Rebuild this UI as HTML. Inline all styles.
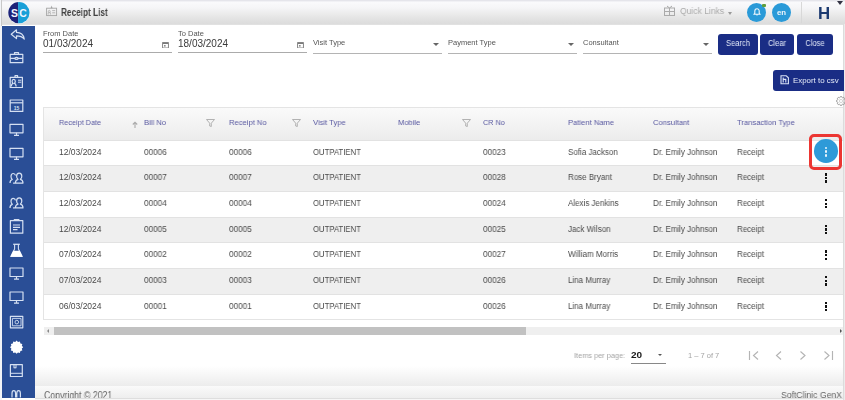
<!DOCTYPE html>
<html><head><meta charset="utf-8">
<style>
*{margin:0;padding:0;box-sizing:border-box}
html,body{width:845px;height:400px;overflow:hidden;background:#fff;font-family:"Liberation Sans",sans-serif}
.a{position:absolute}
.t{position:absolute;white-space:nowrap;line-height:1.2;font-family:"Liberation Sans",sans-serif;will-change:transform}
</style></head><body>
<div class="a" style="left:0;top:0;width:845px;height:25px;background:linear-gradient(#e2e2e8 0px,#e8e8ee 1px,#fafafc 2px,#f5f5f7 8px,#ebebeb 14px,#e1e1e1 20px,#dcdcdc 24px,#e6e6e6 25px)"></div>
<div class="a" style="left:0;top:0;width:2px;height:400px;background:#f2f4f8"></div>
<div class="a" style="left:1px;top:0;width:1px;height:26px;background:#c8c8c8"></div>
<div class="a" style="left:2px;top:26px;width:33px;height:371.7px;background:#2a4e96"></div>
<svg class="a" style="left:7.5px;top:1.5px" width="22" height="22" viewBox="0 0 22 22">
<defs><clipPath id="lc"><circle cx="10.9" cy="10.7" r="10.6"/></clipPath></defs>
<circle cx="10.9" cy="10.7" r="10.9" fill="#eaf4fb"/>
<g clip-path="url(#lc)"><rect x="0" y="0" width="10.1" height="22" fill="#1d2278"/><rect x="10.1" y="0" width="12" height="22" fill="#1aa0d8"/></g>
<text x="6.4" y="14.8" font-size="10.4" font-weight="700" fill="#f4f6ff" text-anchor="middle" font-family="Liberation Sans">S</text>
<text x="15" y="14.8" font-size="10.4" font-weight="700" fill="#f4f6ff" text-anchor="middle" font-family="Liberation Sans">C</text>
</svg>
<svg class="a" style="left:45px;top:4px" width="13" height="13" viewBox="0 0 13 13"><rect x="1.6" y="4.2" width="10" height="7.4" fill="none" stroke="#a4a4a4" stroke-width="0.9"/><path d="M5.6 4.2L6.6 1.4L7.6 4.2z" fill="#a4a4a4"/><path d="M3.2 10.6v-2h2.2v2M4.3 8.4a1 1 0 1 0 0-2a1 1 0 1 0 0 2z" fill="none" stroke="#b0b0b0" stroke-width="0.8"/><path d="M7.2 6.6h3M7.2 8.8h3" stroke="#b0b0b0" stroke-width="0.9"/></svg>
<div class="t" style="left:61.30px;top:5.66px;font-size:10.5px;color:#424242;font-weight:700;transform:scaleX(0.785);transform-origin:0 0;">Receipt List</div>
<svg class="a" style="left:664px;top:5px" width="11" height="11" viewBox="0 0 11 11"><rect x="0.5" y="3" width="10" height="7.5" fill="none" stroke="#aaa"/><path d="M0.5 6.5h10M5.5 3v7.5M3 1l2.5 2l2.5-2" fill="none" stroke="#aaa"/></svg>
<div class="t" style="left:680.00px;top:5.11px;font-size:9.6px;color:#acacac;font-weight:400;transform:scaleX(0.89);transform-origin:0 0;">Quick Links</div>
<div class="a" style="left:727.5px;top:11.5px;width:0;height:0;border-left:2.5px solid transparent;border-right:2.5px solid transparent;border-top:3px solid #999"></div>
<div class="a" style="left:747px;top:3px;width:19px;height:19px;border-radius:50%;background:#2a9ad8"></div>
<svg class="a" style="left:752.5px;top:7.8px" width="8" height="8" viewBox="0 0 8 8"><path d="M4 0.8c-1.5 0-2.2 1.1-2.2 2.5v2l-1 1h6.4l-1-1v-2c0-1.4-.7-2.5-2.2-2.5z" fill="none" stroke="#f2f8fc" stroke-width="1.1" stroke-linejoin="round"/><path d="M3 6.6a1 1 0 0 0 2 0" fill="#f2f8fc"/></svg>
<div class="a" style="left:761.6px;top:3.6px;width:4px;height:3.4px;border-radius:1px;background:#5f9e3c"></div>
<div class="a" style="left:772px;top:3px;width:19px;height:19px;border-radius:50%;background:#2a9ad8"></div>
<div class="t" style="left:776.80px;top:7.92px;font-size:7.8px;color:#eef6fc;font-weight:700;">en</div>
<div class="a" style="left:801px;top:2px;width:1px;height:21px;background:#d8d8d8"></div>
<div class="t" style="left:817.50px;top:3.70px;font-size:16.8px;color:#1c3a70;font-weight:700;">H</div>
<div class="a" style="left:837px;top:1px;width:0;height:0;border-left:3.5px solid transparent;border-right:3.5px solid transparent;border-top:4px solid #334"></div>
<div class="t" style="left:43.00px;top:28.60px;font-size:7.5px;color:#555;font-weight:400;">From Date</div>
<div class="t" style="left:43.00px;top:37.73px;font-size:10px;color:#3a3a3a;font-weight:400;">01/03/2024</div>
<svg class="a" style="left:162px;top:41.5px" width="7" height="6.5" viewBox="0 0 7 6.5"><rect x="0.6" y="0.6" width="5.8" height="5.4" fill="none" stroke="#7a7a7a" stroke-width="0.9"/><rect x="1" y="0.6" width="5" height="1.4" fill="#7a7a7a"/><rect x="2" y="3" width="1.6" height="1.6" fill="#8a8a8a"/></svg>
<div class="a" style="left:43px;top:52px;width:129px;height:1px;background:#ababab"></div>
<div class="t" style="left:178.00px;top:28.60px;font-size:7.5px;color:#555;font-weight:400;">To Date</div>
<div class="t" style="left:178.00px;top:37.73px;font-size:10px;color:#3a3a3a;font-weight:400;">18/03/2024</div>
<svg class="a" style="left:297px;top:41.5px" width="7" height="6.5" viewBox="0 0 7 6.5"><rect x="0.6" y="0.6" width="5.8" height="5.4" fill="none" stroke="#7a7a7a" stroke-width="0.9"/><rect x="1" y="0.6" width="5" height="1.4" fill="#7a7a7a"/><rect x="2" y="3" width="1.6" height="1.6" fill="#8a8a8a"/></svg>
<div class="a" style="left:178px;top:52px;width:129px;height:1px;background:#ababab"></div>
<div class="t" style="left:313.00px;top:38.30px;font-size:7.5px;color:#555;font-weight:400;">Visit Type</div>
<div class="a" style="left:433px;top:43px;width:0;height:0;border-left:3px solid transparent;border-right:3px solid transparent;border-top:3px solid #666"></div>
<div class="a" style="left:313px;top:52.5px;width:129px;height:1px;background:#b4b4b4"></div>
<div class="t" style="left:448.00px;top:38.30px;font-size:7.5px;color:#555;font-weight:400;">Payment Type</div>
<div class="a" style="left:568px;top:43px;width:0;height:0;border-left:3px solid transparent;border-right:3px solid transparent;border-top:3px solid #666"></div>
<div class="a" style="left:448px;top:52.5px;width:129px;height:1px;background:#b4b4b4"></div>
<div class="t" style="left:583.00px;top:38.30px;font-size:7.5px;color:#555;font-weight:400;">Consultant</div>
<div class="a" style="left:703px;top:43px;width:0;height:0;border-left:3px solid transparent;border-right:3px solid transparent;border-top:3px solid #666"></div>
<div class="a" style="left:583px;top:52.5px;width:129px;height:1px;background:#b4b4b4"></div>
<div class="a" style="left:718px;top:34px;width:40px;height:20.5px;border-radius:3px;background:#1a2d85"></div>
<div class="t" style="left:718px;top:39.24px;width:40px;text-align:center;font-size:8.2px;color:#e4eaf8;transform:scaleX(0.92)">Search</div>
<div class="a" style="left:760px;top:34px;width:34px;height:20.5px;border-radius:3px;background:#1a2d85"></div>
<div class="t" style="left:760px;top:39.24px;width:34px;text-align:center;font-size:8.2px;color:#e4eaf8;transform:scaleX(0.92)">Clear</div>
<div class="a" style="left:797px;top:34px;width:36px;height:20.5px;border-radius:3px;background:#1a2d85"></div>
<div class="t" style="left:797px;top:39.24px;width:36px;text-align:center;font-size:8.2px;color:#e4eaf8;transform:scaleX(0.92)">Close</div>
<div class="a" style="left:843px;top:24px;width:2px;height:376px;background:#ebebeb;border-left:1px solid #dcdcdc"></div>
<div class="a" style="left:773px;top:70px;width:70.8px;height:21px;border-radius:3px 0 0 3px;background:#1a2d85"></div>
<svg class="a" style="left:779.5px;top:75.3px" width="9.5" height="9.5" viewBox="0 0 9.5 9.5"><path d="M1 0.8h5.2l2.2 2v6h-7.4z" fill="none" stroke="#dce4f6" stroke-width="1.1"/><path d="M3.2 2.6v5M3.2 4.4h2.6v3.2" fill="none" stroke="#dce4f6" stroke-width="1.1"/></svg>
<div class="t" style="left:792.60px;top:75.72px;font-size:7.9px;color:#e4eaf8;font-weight:400;">Export to csv</div>
<svg class="a" style="left:835.5px;top:95.5px" width="10" height="10" viewBox="0 0 10 10"><polygon points="9.60,5.00 9.56,5.60 8.48,5.93 8.33,6.38 8.12,6.80 8.65,7.80 8.25,8.25 7.80,8.65 6.80,8.12 6.38,8.33 5.93,8.48 5.60,9.56 5.00,9.60 4.40,9.56 4.07,8.48 3.62,8.33 3.20,8.12 2.20,8.65 1.75,8.25 1.35,7.80 1.88,6.80 1.67,6.38 1.52,5.93 0.44,5.60 0.40,5.00 0.44,4.40 1.52,4.07 1.67,3.62 1.88,3.20 1.35,2.20 1.75,1.75 2.20,1.35 3.20,1.88 3.62,1.67 4.07,1.52 4.40,0.44 5.00,0.40 5.60,0.44 5.93,1.52 6.38,1.67 6.80,1.88 7.80,1.35 8.25,1.75 8.65,2.20 8.12,3.20 8.33,3.62 8.48,4.07 9.56,4.40" fill="none" stroke="#999" stroke-width="0.9"/><circle cx="5" cy="5" r="1.6" fill="none" stroke="#bbb" stroke-width="0.6"/></svg>
<div class="a" style="left:43px;top:107px;width:800px;height:212.5px;border:1px solid #e4e4e4;border-right:none;background:#fff"></div>
<div class="a" style="left:44px;top:108px;width:799px;height:31.5px;background:linear-gradient(#fafafa,#ececec)"></div>
<div class="t" style="left:59.00px;top:118.13px;font-size:8px;color:#5858a0;font-weight:400;transform:scaleX(0.91);transform-origin:0 0;">Receipt Date</div>
<div class="t" style="left:143.80px;top:118.13px;font-size:8px;color:#5858a0;font-weight:400;transform:scaleX(0.95);transform-origin:0 0;">Bill No</div>
<div class="t" style="left:228.60px;top:118.13px;font-size:8px;color:#5858a0;font-weight:400;transform:scaleX(0.95);transform-origin:0 0;">Receipt No</div>
<div class="t" style="left:313.40px;top:118.13px;font-size:8px;color:#5858a0;font-weight:400;transform:scaleX(0.95);transform-origin:0 0;">Visit Type</div>
<div class="t" style="left:398.20px;top:118.13px;font-size:8px;color:#5858a0;font-weight:400;transform:scaleX(0.95);transform-origin:0 0;">Mobile</div>
<div class="t" style="left:483.00px;top:118.13px;font-size:8px;color:#5858a0;font-weight:400;transform:scaleX(0.91);transform-origin:0 0;">CR No</div>
<div class="t" style="left:567.80px;top:118.13px;font-size:8px;color:#5858a0;font-weight:400;transform:scaleX(0.95);transform-origin:0 0;">Patient Name</div>
<div class="t" style="left:652.60px;top:118.13px;font-size:8px;color:#5858a0;font-weight:400;transform:scaleX(0.95);transform-origin:0 0;">Consultant</div>
<div class="t" style="left:737.40px;top:118.13px;font-size:8px;color:#5858a0;font-weight:400;transform:scaleX(0.95);transform-origin:0 0;">Transaction Type</div>
<svg class="a" style="left:132px;top:121px" width="6" height="7" viewBox="0 0 6 7"><path d="M3 7V1.5M0.8 3.5L3 1.2L5.2 3.5" fill="none" stroke="#aaa" stroke-width="1.1"/></svg>
<svg class="a" style="left:206px;top:119px" width="9" height="8" viewBox="0 0 9 8"><path d="M0.5 0.5h8L5.3 4.2v3.3L3.7 7V4.2z" fill="none" stroke="#aaa" stroke-width="0.9"/></svg>
<svg class="a" style="left:291.5px;top:119px" width="9" height="8" viewBox="0 0 9 8"><path d="M0.5 0.5h8L5.3 4.2v3.3L3.7 7V4.2z" fill="none" stroke="#aaa" stroke-width="0.9"/></svg>
<svg class="a" style="left:461.5px;top:119px" width="9" height="8" viewBox="0 0 9 8"><path d="M0.5 0.5h8L5.3 4.2v3.3L3.7 7V4.2z" fill="none" stroke="#aaa" stroke-width="0.9"/></svg>
<div class="a" style="left:44px;top:139.50px;width:799px;height:25.70px;background:#fff;border-top:1px solid #e2e2e2"></div>
<div class="t" style="left:59.00px;top:146.55px;font-size:8.5px;color:#4a4a4a;font-weight:400;">12/03/2024</div>
<div class="t" style="left:143.80px;top:146.55px;font-size:8.5px;color:#4a4a4a;font-weight:400;transform:scaleX(0.96);transform-origin:0 0;">00006</div>
<div class="t" style="left:228.60px;top:146.55px;font-size:8.5px;color:#4a4a4a;font-weight:400;transform:scaleX(0.96);transform-origin:0 0;">00006</div>
<div class="t" style="left:313.40px;top:146.55px;font-size:8.5px;color:#4a4a4a;font-weight:400;transform:scaleX(0.91);transform-origin:0 0;">OUTPATIENT</div>
<div class="t" style="left:483.00px;top:146.55px;font-size:8.5px;color:#4a4a4a;font-weight:400;transform:scaleX(0.96);transform-origin:0 0;">00023</div>
<div class="t" style="left:567.80px;top:146.55px;font-size:8.5px;color:#4a4a4a;font-weight:400;transform:scaleX(0.94);transform-origin:0 0;">Sofia Jackson</div>
<div class="t" style="left:652.60px;top:146.55px;font-size:8.5px;color:#4a4a4a;font-weight:400;transform:scaleX(0.94);transform-origin:0 0;">Dr. Emily Johnson</div>
<div class="t" style="left:737.40px;top:146.55px;font-size:8.5px;color:#4a4a4a;font-weight:400;transform:scaleX(0.94);transform-origin:0 0;">Receipt</div>
<div class="a" style="left:44px;top:165.20px;width:799px;height:25.70px;background:#efefef;border-top:1px solid #e2e2e2"></div>
<div class="t" style="left:59.00px;top:172.25px;font-size:8.5px;color:#4a4a4a;font-weight:400;">12/03/2024</div>
<div class="t" style="left:143.80px;top:172.25px;font-size:8.5px;color:#4a4a4a;font-weight:400;transform:scaleX(0.96);transform-origin:0 0;">00007</div>
<div class="t" style="left:228.60px;top:172.25px;font-size:8.5px;color:#4a4a4a;font-weight:400;transform:scaleX(0.96);transform-origin:0 0;">00007</div>
<div class="t" style="left:313.40px;top:172.25px;font-size:8.5px;color:#4a4a4a;font-weight:400;transform:scaleX(0.91);transform-origin:0 0;">OUTPATIENT</div>
<div class="t" style="left:483.00px;top:172.25px;font-size:8.5px;color:#4a4a4a;font-weight:400;transform:scaleX(0.96);transform-origin:0 0;">00028</div>
<div class="t" style="left:567.80px;top:172.25px;font-size:8.5px;color:#4a4a4a;font-weight:400;transform:scaleX(0.94);transform-origin:0 0;">Rose Bryant</div>
<div class="t" style="left:652.60px;top:172.25px;font-size:8.5px;color:#4a4a4a;font-weight:400;transform:scaleX(0.94);transform-origin:0 0;">Dr. Emily Johnson</div>
<div class="t" style="left:737.40px;top:172.25px;font-size:8.5px;color:#4a4a4a;font-weight:400;transform:scaleX(0.94);transform-origin:0 0;">Receipt</div>
<div class="a" style="left:824.8px;top:173.25px;width:2.4px;height:2.3px;background:#111"></div>
<div class="a" style="left:824.8px;top:176.85px;width:2.4px;height:2.3px;background:#111"></div>
<div class="a" style="left:824.8px;top:180.45px;width:2.4px;height:2.3px;background:#111"></div>
<div class="a" style="left:44px;top:190.90px;width:799px;height:25.70px;background:#fff;border-top:1px solid #e2e2e2"></div>
<div class="t" style="left:59.00px;top:197.95px;font-size:8.5px;color:#4a4a4a;font-weight:400;">12/03/2024</div>
<div class="t" style="left:143.80px;top:197.95px;font-size:8.5px;color:#4a4a4a;font-weight:400;transform:scaleX(0.96);transform-origin:0 0;">00004</div>
<div class="t" style="left:228.60px;top:197.95px;font-size:8.5px;color:#4a4a4a;font-weight:400;transform:scaleX(0.96);transform-origin:0 0;">00004</div>
<div class="t" style="left:313.40px;top:197.95px;font-size:8.5px;color:#4a4a4a;font-weight:400;transform:scaleX(0.91);transform-origin:0 0;">OUTPATIENT</div>
<div class="t" style="left:483.00px;top:197.95px;font-size:8.5px;color:#4a4a4a;font-weight:400;transform:scaleX(0.96);transform-origin:0 0;">00024</div>
<div class="t" style="left:567.80px;top:197.95px;font-size:8.5px;color:#4a4a4a;font-weight:400;transform:scaleX(0.94);transform-origin:0 0;">Alexis Jenkins</div>
<div class="t" style="left:652.60px;top:197.95px;font-size:8.5px;color:#4a4a4a;font-weight:400;transform:scaleX(0.94);transform-origin:0 0;">Dr. Emily Johnson</div>
<div class="t" style="left:737.40px;top:197.95px;font-size:8.5px;color:#4a4a4a;font-weight:400;transform:scaleX(0.94);transform-origin:0 0;">Receipt</div>
<div class="a" style="left:824.8px;top:198.95px;width:2.4px;height:2.3px;background:#111"></div>
<div class="a" style="left:824.8px;top:202.55px;width:2.4px;height:2.3px;background:#111"></div>
<div class="a" style="left:824.8px;top:206.15px;width:2.4px;height:2.3px;background:#111"></div>
<div class="a" style="left:44px;top:216.60px;width:799px;height:25.70px;background:#efefef;border-top:1px solid #e2e2e2"></div>
<div class="t" style="left:59.00px;top:223.65px;font-size:8.5px;color:#4a4a4a;font-weight:400;">12/03/2024</div>
<div class="t" style="left:143.80px;top:223.65px;font-size:8.5px;color:#4a4a4a;font-weight:400;transform:scaleX(0.96);transform-origin:0 0;">00005</div>
<div class="t" style="left:228.60px;top:223.65px;font-size:8.5px;color:#4a4a4a;font-weight:400;transform:scaleX(0.96);transform-origin:0 0;">00005</div>
<div class="t" style="left:313.40px;top:223.65px;font-size:8.5px;color:#4a4a4a;font-weight:400;transform:scaleX(0.91);transform-origin:0 0;">OUTPATIENT</div>
<div class="t" style="left:483.00px;top:223.65px;font-size:8.5px;color:#4a4a4a;font-weight:400;transform:scaleX(0.96);transform-origin:0 0;">00025</div>
<div class="t" style="left:567.80px;top:223.65px;font-size:8.5px;color:#4a4a4a;font-weight:400;transform:scaleX(0.94);transform-origin:0 0;">Jack Wilson</div>
<div class="t" style="left:652.60px;top:223.65px;font-size:8.5px;color:#4a4a4a;font-weight:400;transform:scaleX(0.94);transform-origin:0 0;">Dr. Emily Johnson</div>
<div class="t" style="left:737.40px;top:223.65px;font-size:8.5px;color:#4a4a4a;font-weight:400;transform:scaleX(0.94);transform-origin:0 0;">Receipt</div>
<div class="a" style="left:824.8px;top:224.65px;width:2.4px;height:2.3px;background:#111"></div>
<div class="a" style="left:824.8px;top:228.25px;width:2.4px;height:2.3px;background:#111"></div>
<div class="a" style="left:824.8px;top:231.85px;width:2.4px;height:2.3px;background:#111"></div>
<div class="a" style="left:44px;top:242.30px;width:799px;height:25.70px;background:#fff;border-top:1px solid #e2e2e2"></div>
<div class="t" style="left:59.00px;top:249.35px;font-size:8.5px;color:#4a4a4a;font-weight:400;">07/03/2024</div>
<div class="t" style="left:143.80px;top:249.35px;font-size:8.5px;color:#4a4a4a;font-weight:400;transform:scaleX(0.96);transform-origin:0 0;">00002</div>
<div class="t" style="left:228.60px;top:249.35px;font-size:8.5px;color:#4a4a4a;font-weight:400;transform:scaleX(0.96);transform-origin:0 0;">00002</div>
<div class="t" style="left:313.40px;top:249.35px;font-size:8.5px;color:#4a4a4a;font-weight:400;transform:scaleX(0.91);transform-origin:0 0;">OUTPATIENT</div>
<div class="t" style="left:483.00px;top:249.35px;font-size:8.5px;color:#4a4a4a;font-weight:400;transform:scaleX(0.96);transform-origin:0 0;">00027</div>
<div class="t" style="left:567.80px;top:249.35px;font-size:8.5px;color:#4a4a4a;font-weight:400;transform:scaleX(0.94);transform-origin:0 0;">William Morris</div>
<div class="t" style="left:652.60px;top:249.35px;font-size:8.5px;color:#4a4a4a;font-weight:400;transform:scaleX(0.94);transform-origin:0 0;">Dr. Emily Johnson</div>
<div class="t" style="left:737.40px;top:249.35px;font-size:8.5px;color:#4a4a4a;font-weight:400;transform:scaleX(0.94);transform-origin:0 0;">Receipt</div>
<div class="a" style="left:824.8px;top:250.35px;width:2.4px;height:2.3px;background:#111"></div>
<div class="a" style="left:824.8px;top:253.95px;width:2.4px;height:2.3px;background:#111"></div>
<div class="a" style="left:824.8px;top:257.55px;width:2.4px;height:2.3px;background:#111"></div>
<div class="a" style="left:44px;top:268.00px;width:799px;height:25.70px;background:#efefef;border-top:1px solid #e2e2e2"></div>
<div class="t" style="left:59.00px;top:275.05px;font-size:8.5px;color:#4a4a4a;font-weight:400;">07/03/2024</div>
<div class="t" style="left:143.80px;top:275.05px;font-size:8.5px;color:#4a4a4a;font-weight:400;transform:scaleX(0.96);transform-origin:0 0;">00003</div>
<div class="t" style="left:228.60px;top:275.05px;font-size:8.5px;color:#4a4a4a;font-weight:400;transform:scaleX(0.96);transform-origin:0 0;">00003</div>
<div class="t" style="left:313.40px;top:275.05px;font-size:8.5px;color:#4a4a4a;font-weight:400;transform:scaleX(0.91);transform-origin:0 0;">OUTPATIENT</div>
<div class="t" style="left:483.00px;top:275.05px;font-size:8.5px;color:#4a4a4a;font-weight:400;transform:scaleX(0.96);transform-origin:0 0;">00026</div>
<div class="t" style="left:567.80px;top:275.05px;font-size:8.5px;color:#4a4a4a;font-weight:400;transform:scaleX(0.94);transform-origin:0 0;">Lina Murray</div>
<div class="t" style="left:652.60px;top:275.05px;font-size:8.5px;color:#4a4a4a;font-weight:400;transform:scaleX(0.94);transform-origin:0 0;">Dr. Emily Johnson</div>
<div class="t" style="left:737.40px;top:275.05px;font-size:8.5px;color:#4a4a4a;font-weight:400;transform:scaleX(0.94);transform-origin:0 0;">Receipt</div>
<div class="a" style="left:824.8px;top:276.05px;width:2.4px;height:2.3px;background:#111"></div>
<div class="a" style="left:824.8px;top:279.65px;width:2.4px;height:2.3px;background:#111"></div>
<div class="a" style="left:824.8px;top:283.25px;width:2.4px;height:2.3px;background:#111"></div>
<div class="a" style="left:44px;top:293.70px;width:799px;height:25.70px;background:#fff;border-top:1px solid #e2e2e2"></div>
<div class="t" style="left:59.00px;top:300.75px;font-size:8.5px;color:#4a4a4a;font-weight:400;">06/03/2024</div>
<div class="t" style="left:143.80px;top:300.75px;font-size:8.5px;color:#4a4a4a;font-weight:400;transform:scaleX(0.96);transform-origin:0 0;">00001</div>
<div class="t" style="left:228.60px;top:300.75px;font-size:8.5px;color:#4a4a4a;font-weight:400;transform:scaleX(0.96);transform-origin:0 0;">00001</div>
<div class="t" style="left:313.40px;top:300.75px;font-size:8.5px;color:#4a4a4a;font-weight:400;transform:scaleX(0.91);transform-origin:0 0;">OUTPATIENT</div>
<div class="t" style="left:483.00px;top:300.75px;font-size:8.5px;color:#4a4a4a;font-weight:400;transform:scaleX(0.96);transform-origin:0 0;">00026</div>
<div class="t" style="left:567.80px;top:300.75px;font-size:8.5px;color:#4a4a4a;font-weight:400;transform:scaleX(0.94);transform-origin:0 0;">Lina Murray</div>
<div class="t" style="left:652.60px;top:300.75px;font-size:8.5px;color:#4a4a4a;font-weight:400;transform:scaleX(0.94);transform-origin:0 0;">Dr. Emily Johnson</div>
<div class="t" style="left:737.40px;top:300.75px;font-size:8.5px;color:#4a4a4a;font-weight:400;transform:scaleX(0.94);transform-origin:0 0;">Receipt</div>
<div class="a" style="left:824.8px;top:301.75px;width:2.4px;height:2.3px;background:#111"></div>
<div class="a" style="left:824.8px;top:305.35px;width:2.4px;height:2.3px;background:#111"></div>
<div class="a" style="left:824.8px;top:308.95px;width:2.4px;height:2.3px;background:#111"></div>
<div class="a" style="left:809.2px;top:134.2px;width:33.2px;height:35.8px;border:3.8px solid #ec3632;border-radius:5px"></div>
<div class="a" style="left:814.3px;top:139.2px;width:23.6px;height:23.6px;border-radius:50%;background:#2e9ad8"></div>
<div class="a" style="left:824.7px;top:146.70px;width:2.8px;height:2.8px;border-radius:50%;background:#e8f4fc"></div>
<div class="a" style="left:824.7px;top:150.40px;width:2.8px;height:2.8px;border-radius:50%;background:#e8f4fc"></div>
<div class="a" style="left:824.7px;top:154.10px;width:2.8px;height:2.8px;border-radius:50%;background:#e8f4fc"></div>
<div class="a" style="left:44px;top:327px;width:799px;height:8px;background:#efefef"></div>
<div class="a" style="left:54px;top:327px;width:472px;height:8px;background:#c1c1c1"></div>
<div class="a" style="left:47px;top:329px;width:0;height:0;border-top:2px solid transparent;border-bottom:2px solid transparent;border-right:2px solid #888"></div>
<div class="a" style="left:840px;top:329px;width:0;height:0;border-top:2.5px solid transparent;border-bottom:2.5px solid transparent;border-left:2.5px solid #555"></div>
<div class="t" style="left:573.50px;top:350.81px;font-size:7.6px;color:#a4a4a4;font-weight:400;transform:scaleX(0.97);transform-origin:0 0;">Items per page:</div>
<div class="t" style="left:631.00px;top:350.17px;font-size:8.8px;color:#1a1a1a;font-weight:700;transform:scaleX(1.14);transform-origin:0 0;">20</div>
<div class="a" style="left:658.2px;top:354px;width:0;height:0;border-left:2.4px solid transparent;border-right:2.4px solid transparent;border-top:2.4px solid #555"></div>
<div class="a" style="left:631px;top:363px;width:35px;height:1px;background:#888"></div>
<div class="t" style="left:688.00px;top:350.90px;font-size:7.5px;color:#a4a4a4;font-weight:400;">1 – 7 of 7</div>
<svg class="a" style="left:748px;top:350px" width="86" height="11" viewBox="0 0 86 11"><g fill="none" stroke="#b4b4b4" stroke-width="1.15"><path d="M1.5 1v9M10 1.5L5.5 5.5L10 9.5"/><path d="M33 1.5L28.5 5.5L33 9.5"/><path d="M52.5 1.5L57 5.5L52.5 9.5"/><path d="M76.5 1.5L81 5.5L76.5 9.5M84.5 1v9"/></g></svg>
<div class="a" style="left:35px;top:366px;width:808px;height:19.5px;background:linear-gradient(#fff,#ececec)"></div>
<div class="a" style="left:35px;top:385.5px;width:808px;height:12px;background:linear-gradient(#fafafa,#eeeeee);overflow:hidden"><div class="t" style="left:9.00px;top:4.85px;font-size:10.2px;color:#666;font-weight:400;transform:scaleX(0.86);transform-origin:0 0;">Copyright © 2021</div><div class="t" style="left:746.00px;top:3.21px;font-size:9.6px;color:#666;font-weight:400;transform:scaleX(0.9);transform-origin:0 0;">SoftClinic GenX</div></div>
<div class="a" style="left:35px;top:397.5px;width:808px;height:1px;background:#dedede"></div>
<div class="a" style="left:35px;top:398.5px;width:808px;height:1.5px;background:#f6f6f6"></div>
<svg class="a" style="left:0;top:0" width="40" height="400" viewBox="0 0 40 400">
<g fill="none" stroke="#d5e0f2" stroke-width="1.2" stroke-linejoin="round">
<path d="M16.5 29.8L11.2 34.2L16.5 38.6V35.8C20 35.8 22.5 36.8 24.3 39C23.6 35.2 21 32.4 16.5 32.4Z"/>
<rect x="10.2" y="54.3" width="12.6" height="8.4"/><path d="M14.5 54.3v-1.7h4v1.7M10.2 58.3h4.8M18 58.3h4.8"/><ellipse cx="16.5" cy="58.4" rx="1.6" ry="1"/>
<rect x="10.2" y="77.3" width="12.2" height="10.2"/><path d="M15 77.3v-1.6h2.6v1.6"/><path d="M11.3 86.5c0-2 .6-2.8 1.8-3c-.8-.6-1-1.4-1-2.2c0-1.2.7-2 1.6-2s1.6.8 1.6 2c0 .8-.2 1.6-1 2.2c1.2.2 1.8 1 1.8 3"/><path d="M18 80.2h3.3M18 82.2h3.3" stroke-width="1"/>
<rect x="10.2" y="100" width="12.6" height="11.4"/><path d="M10.2 102.8h12.6" />
<rect x="10" y="124.3" width="13" height="8.5" fill="none"/><path d="M16.5 132.8v2.5M14 135.4h5"/><rect x="10" y="148.3" width="13" height="8.5" fill="none"/><path d="M16.5 156.8v2.5M14 159.4h5"/>
<path d="M10 183.1c0-2.5 1-3.3 2.3-3.6c-1-.8-1.3-1.8-1.3-3c0-1.8 1-3 2.3-3c1.2 0 2 .8 2.2 2"/><path d="M13.5 183.1h9.5c0-2.6-1-3.4-2.6-3.8c1-.7 1.4-1.8 1.4-3.1c0-1.9-1.1-3.1-2.6-3.1s-2.6 1.2-2.6 3.1c0 1.3.4 2.4 1.4 3.1c-1.6.4-2.6 1.2-2.6 3.8z"/><path d="M10 207.9c0-2.5 1-3.3 2.3-3.6c-1-.8-1.3-1.8-1.3-3c0-1.8 1-3 2.3-3c1.2 0 2 .8 2.2 2"/><path d="M13.5 207.9h9.5c0-2.6-1-3.4-2.6-3.8c1-.7 1.4-1.8 1.4-3.1c0-1.9-1.1-3.1-2.6-3.1s-2.6 1.2-2.6 3.1c0 1.3.4 2.4 1.4 3.1c-1.6.4-2.6 1.2-2.6 3.8z"/>
<rect x="10.4" y="220.6" width="12.4" height="12.6"/><path d="M14.3 220.6v-1h4.6v1M13 225h7M13 227.3h7M13 229.6h4.5"/>
<rect x="10" y="268.0" width="13" height="8.5" fill="none"/><path d="M16.5 276.5v2.5M14 279.1h5"/><rect x="10" y="292.0" width="13" height="8.5" fill="none"/><path d="M16.5 300.5v2.5M14 303.1h5"/>
<rect x="10.4" y="316.4" width="12.4" height="11.4"/><rect x="12.4" y="318.4" width="8.6" height="7.4" stroke-width="0.9"/><circle cx="16.8" cy="322.1" r="1.8" stroke-width="0.9"/>
<rect x="10.4" y="364.6" width="11.9" height="11.9"/><path d="M10.4 373.3h11.9M14 364.6v3.6l1-0.8l1 0.8v-3.6" stroke-width="1"/>
<path d="M12 397.5v-4c0-1.5 .6-2.8 1.8-2.8s1.8 1.3 1.8 2.8v4M16.8 397.5v-4c0-1.5 .6-2.8 1.8-2.8s1.8 1.3 1.8 2.8v4"/>
</g>
<text x="16.5" y="110" font-size="5" font-weight="700" fill="#d5e0f2" text-anchor="middle" font-family="Liberation Sans">15</text>
<path d="M14.6 244.6v4.4L10.8 256.4h11.4L18.4 249V244.6" fill="none" stroke="#d5e0f2" stroke-width="1.1" stroke-linejoin="round"/>
<path d="M13.2 250.8h6.6L22.6 256.8h-12.2z" fill="#fff"/>
<path d="M13.2 244.3h6.6" stroke="#d5e0f2" stroke-width="1.3"/>
<polygon fill="#fff" points="23.20,347.20 21.82,348.60 22.32,350.50 20.42,351.02 19.90,352.92 18.00,352.42 16.60,353.80 15.20,352.42 13.30,352.92 12.78,351.02 10.88,350.50 11.38,348.60 10.00,347.20 11.38,345.80 10.88,343.90 12.78,343.38 13.30,341.48 15.20,341.98 16.60,340.60 18.00,341.98 19.90,341.48 20.42,343.38 22.32,343.90 21.82,345.80"/>
</svg>
</body></html>
